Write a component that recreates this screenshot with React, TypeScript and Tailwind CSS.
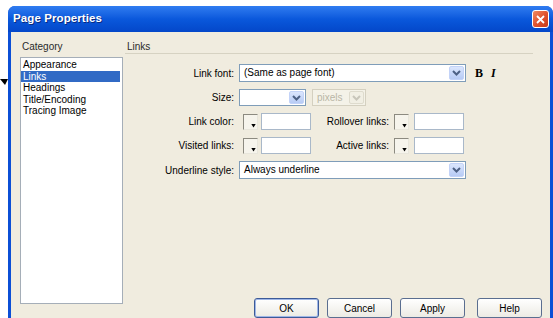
import React from 'react';

const font = { fontFamily: '"Liberation Sans", Arial, sans-serif' };

const Chevron: React.FC<{ disabled?: boolean }> = ({ disabled }) => (
  <svg width="9" height="6" viewBox="0 0 9 6">
    <path d="M1 1 L4.5 4.5 L8 1" fill="none" stroke={disabled ? '#c8c6ba' : '#4d6185'} strokeWidth="2" />
  </svg>
);

const Select: React.FC<{ value?: string; className: string; disabled?: boolean }> = ({ value, className, disabled }) => (
  <div
    className={`flex items-center border ${disabled ? 'border-[#d4d0c0] bg-[#f4f2e8] text-[#b9b6a6]' : 'border-[#7f9db9] bg-white text-black'} ${className}`}
  >
    <span className="flex-1 truncate pl-[4px] leading-none">{value}</span>
    <div
      className={`mr-[1px] flex h-[calc(100%-2px)] w-[15px] items-center justify-center rounded-[2px] ${disabled ? 'bg-[#f1efe4] border border-[#dedbcd]' : 'bg-gradient-to-b from-[#dbe6fd] to-[#b7cbf5] border border-[#c3d3f8]'}`}
    >
      <Chevron disabled={disabled} />
    </div>
  </div>
);

const Swatch: React.FC = () => (
  <div className="relative h-[16px] w-[15px] border-l border-t border-[#8c8a80] border-r border-b border-r-[#e8e6dc] border-b-[#e8e6dc] bg-[#f6f4ec]">
    <div className="absolute bottom-[1px] right-[1px] h-[4px] w-[5px] bg-black [clip-path:polygon(0_0,100%_0,50%_100%)]" />
  </div>
);

const TextBox: React.FC<{ className?: string }> = ({ className }) => (
  <div className={`h-[17px] w-[50px] border border-[#a9b8c9] bg-white ${className ?? ''}`} />
);

const Btn: React.FC<{ label: string; isDefault?: boolean }> = ({ label, isDefault }) => (
  <div
    className={`flex h-[20px] w-[65px] items-center justify-center rounded-[3px] border ${isDefault ? 'border-[#3c5a98] shadow-[inset_0_0_0_1px_#9fb6e6]' : 'border-[#5a6e90]'} bg-gradient-to-b from-white to-[#ecebe4] text-[10px] text-black`}
  >
    {label}
  </div>
);

export default function App() {
  const categories = ['Appearance', 'Links', 'Headings', 'Title/Encoding', 'Tracing Image'];

  return (
    <div className="relative h-[318px] w-[553px] overflow-hidden bg-white pl-[8px] pt-[6px]" style={font}>
      {/* annotation pointer */}
      <svg className="absolute left-0 top-[78px]" width="9" height="9" viewBox="0 0 9 9">
        <polygon points="0,1 8,1 5,7" fill="#000" />
      </svg>

      <div className="flex h-[330px] w-[545px] flex-col overflow-hidden rounded-t-[7px] bg-[#0b4fd6]">
        {/* title bar */}
        <div className="flex h-[26px] items-center bg-gradient-to-b from-[#2f7cf0] via-[#0a58dc] to-[#0447c9] pl-[5px] pr-[4px]">
          <span className="text-[11.5px] font-bold tracking-[0.1px] text-white [text-shadow:1px_1px_0_#0a2a80]">Page Properties</span>
          <div className="ml-auto flex h-[18px] w-[17px] items-center justify-center rounded-[3px] border border-white bg-gradient-to-br from-[#ef8a62] via-[#e0532f] to-[#c83a18]">
            <svg width="9" height="9" viewBox="0 0 9 9">
              <path d="M1 1 L8 8 M8 1 L1 8" stroke="#fff" strokeWidth="1.8" />
            </svg>
          </div>
        </div>

        {/* body */}
        <div className="mx-[3px] flex flex-1 bg-[#f0ecdf] text-[10px] text-black">
          {/* category column */}
          <div className="flex w-[114px] flex-col pl-[9px] pt-[9px]">
            <div className="h-[16px] pl-[2px] leading-[11px] text-[#2a2a2a]">Category</div>
            <div className="h-[247px] w-[103px] border border-[#a5aeb8] bg-white py-[1px]">
              {categories.map((c) => (
                <div
                  key={c}
                  className={`h-[11.5px] pl-[2px] leading-[11.5px] ${c === 'Links' ? 'mr-[2px] bg-[#316ac5] text-white' : 'text-black'}`}
                >
                  {c}
                </div>
              ))}
            </div>
          </div>

          {/* settings column */}
          <div className="flex flex-1 flex-col pt-[9px]">
            <div className="mr-[17px] border-b border-[#d6d2c2] pb-[1px] pl-[2px] leading-[11px] text-[#2a2a2a]">Links</div>

            <div className="mt-[10px] flex flex-col gap-[7px]">
              <div className="flex h-[18px] items-center">
                <div className="w-[109px] text-right">Link font:</div>
                <Select value="(Same as page font)" className="ml-[5px] h-[18px] w-[227px]" />
                <span className="ml-[9px] text-[12px] font-bold" style={{ fontFamily: '"Liberation Serif", serif' }}>B</span>
                <span className="ml-[8px] text-[12px] font-bold italic" style={{ fontFamily: '"Liberation Serif", serif' }}>I</span>
              </div>

              <div className="flex h-[17px] items-center">
                <div className="w-[109px] text-right">Size:</div>
                <Select className="ml-[5px] h-[17px] w-[67px]" />
                <Select value="pixels" disabled className="ml-[6px] h-[17px] w-[54px]" />
              </div>

              <div className="flex h-[17px] items-center">
                <div className="w-[109px] text-right">Link color:</div>
                <div className="ml-[9px]"><Swatch /></div>
                <TextBox className="ml-[3px]" />
                <div className="w-[78px] text-right">Rollover links:</div>
                <div className="ml-[5px]"><Swatch /></div>
                <TextBox className="ml-[5px]" />
              </div>

              <div className="flex h-[17px] items-center">
                <div className="w-[109px] text-right">Visited links:</div>
                <div className="ml-[9px]"><Swatch /></div>
                <TextBox className="ml-[3px]" />
                <div className="w-[78px] text-right">Active links:</div>
                <div className="ml-[5px]"><Swatch /></div>
                <TextBox className="ml-[5px]" />
              </div>

              <div className="flex h-[18px] items-center">
                <div className="w-[109px] text-right">Underline style:</div>
                <Select value="Always underline" className="ml-[5px] h-[18px] w-[227px]" />
              </div>
            </div>

            <div className="mt-[119px] flex justify-end pr-[8px]">
              <Btn label="OK" isDefault />
              <div className="ml-[8px]"><Btn label="Cancel" /></div>
              <div className="ml-[8px]"><Btn label="Apply" /></div>
              <div className="ml-[12px]"><Btn label="Help" /></div>
            </div>
          </div>
        </div>
      </div>
    </div>
  );
}
